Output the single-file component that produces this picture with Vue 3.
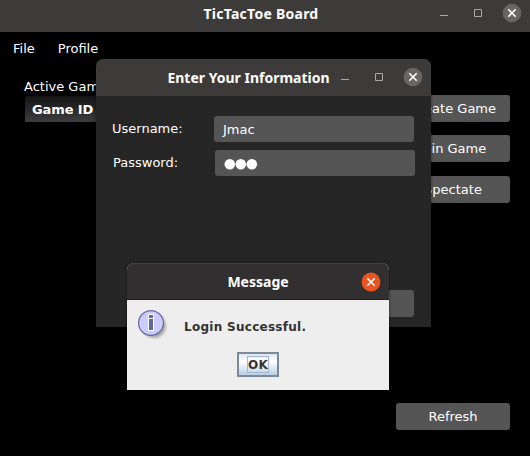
<script setup>
const menus = ['File', 'Profile']
const actions = ['Create Game', 'Join Game', 'Spectate']
</script>

<template>
  <div class="desktop">
    <section class="board">
      <header class="titlebar board-bar">
        <h1 class="title board-title">TicTacToe Board</h1>
        <svg class="controls" width="86" height="20" viewBox="0 0 86 20">
          <path class="ctl" d="M4 12.5h8M38.5 6.5h7v7h-7z" />
          <circle cx="76" cy="10" r="9.3" fill="#666" />
          <path class="x" d="M72.3 6.3l7.4 7.4M79.7 6.3l-7.4 7.4" />
        </svg>
      </header>
      <nav class="menu">
        <span v-for="m in menus" :key="m">{{ m }}</span>
      </nav>
      <div class="content">
        <div class="games">
          <div class="caption">Active Games</div>
          <div class="thead">Game ID</div>
        </div>
        <div class="side">
          <button v-for="a in actions" :key="a" class="btn" :class="{ low: a === 'Spectate' }">{{ a }}</button>
          <button class="btn refresh">Refresh</button>
        </div>
      </div>
    </section>

    <section class="login">
      <header class="titlebar login-bar">
        <h2 class="title login-title">Enter Your Information</h2>
        <svg class="controls" width="86" height="20" viewBox="0 0 86 20">
          <path class="ctl" d="M4 12.5h8M38.5 6.5h7v7h-7z" />
          <circle cx="76" cy="10" r="9.3" fill="#666" />
          <path class="x" d="M72.3 6.3l7.4 7.4M79.7 6.3l-7.4 7.4" />
        </svg>
      </header>
      <div class="form">
        <div class="row">
          <label>Username:</label>
          <div class="field">Jmac</div>
        </div>
        <div class="row second">
          <label>Password:</label>
          <div class="field">
            <svg class="dots" width="34" height="12" viewBox="0 0 34 12">
              <circle cx="5.8" cy="6.3" r="5.3" /><circle cx="16.8" cy="6.3" r="5.3" /><circle cx="27.8" cy="6.3" r="5.3" />
            </svg>
          </div>
        </div>
        <button class="btn submit"></button>
      </div>
    </section>

    <section class="message">
      <header class="titlebar message-bar">
        <h2 class="title message-title">Message</h2>
        <svg class="controls" width="20" height="20" viewBox="0 0 20 20">
          <circle cx="10" cy="10" r="9.4" fill="#e95420" />
          <path class="x" d="M6.3 6.3l7.4 7.4M13.7 6.3l-7.4 7.4" />
        </svg>
      </header>
      <div class="body">
        <div class="notice">
          <svg class="info" width="32" height="32" viewBox="0 0 32 32">
            <defs>
              <filter id="soft" x="-30%" y="-30%" width="160%" height="160%"><feGaussianBlur stdDeviation="1.3" /></filter>
            </defs>
            <circle cx="16" cy="16" r="12" fill="#777" opacity=".55" filter="url(#soft)" />
            <circle cx="13" cy="13" r="12.4" fill="#ccf" stroke="#669" stroke-width="1.2" />
            <path d="M10 4h6v17h-6z" fill="#fff" />
            <path d="M11 5h4v3h-4zM11 9h4v11h-4z" fill="#669" />
          </svg>
          <p>Login Successful.</p>
        </div>
        <button class="ok"><span>OK</span></button>
      </div>
    </section>
  </div>
</template>

<style>
body { background: #000; }
</style>

<style scoped>
* { box-sizing: border-box; }
.desktop {
  position: relative;
  width: 530px;
  height: 456px;
  overflow: hidden;
  background: #000;
  color: #fff;
  font: 13px/16px "DejaVu Sans", sans-serif;
}
.titlebar { display: grid; align-items: center; background: #3d3b39; }
.title {
  grid-area: 1 / 1;
  justify-self: center;
  margin: 0;
  font: bold 14px/20px "Noto Sans", sans-serif;
  white-space: nowrap;
  color: #fff;
}
.controls { grid-area: 1 / 1; justify-self: end; display: block; }
.ctl { fill: none; stroke: #aaa9a8; stroke-width: 1; }
.x { fill: none; stroke: #fff; stroke-width: 1.6; }
.board-bar { height: 32px; padding: 0 8px 6px 0; }
.board-title { margin: 2px 0 0; letter-spacing: .25px; }
.menu { display: flex; gap: 23px; height: 32px; padding: 9px 13px 7px; }
.content { display: flex; justify-content: space-between; padding: 15px 20px 0 24px; }
.caption { height: 17px; }
.thead {
  width: 200px;
  height: 26px;
  margin-left: 1px;
  padding: 6px 7px 4px;
  font-weight: bold;
  letter-spacing: -.1px;
  background: linear-gradient(#141414, #3d3d3d);
}
.side { display: flex; flex-direction: column; gap: 13px; padding-top: 16px; }
.btn {
  width: 114px;
  height: 27px;
  padding: 0;
  border: 0;
  border-radius: 3px;
  background: #555;
  color: #fff;
  font: 13px/27px "DejaVu Sans", sans-serif;
}
.low { margin-top: 1px; }
.refresh { margin-top: 187px; }
.login {
  position: absolute;
  left: 96px;
  top: 59px;
  width: 335px;
  height: 268px;
  border-radius: 7px 7px 0 0;
  overflow: hidden;
  background: #262626;
}
.login-bar { height: 37px; padding: 0 8px 1px 0; }
.login-title { margin: 1px 22px 0 0; }
.form { display: flex; flex-direction: column; padding: 20px 17px 0 16px; }
.row { display: flex; justify-content: space-between; height: 26px; }
.row label { padding-top: 5px; }
.second { margin: 8px -1px 0 1px; }
.field {
  width: 200px;
  height: 26px;
  padding: 6px 9px 4px;
  border-radius: 3px;
  background: #555;
}
.dots { display: block; margin-top: 2px; fill: #fff; }
.submit { align-self: flex-end; margin-top: 114px; }
.message {
  position: absolute;
  left: 127px;
  top: 263px;
  width: 262px;
  height: 127px;
  border-radius: 7px 7px 0 0;
  overflow: hidden;
  background: #eee;
}
.login, .message { box-shadow: 0 0 3px rgba(0, 0, 0, .55); }
.message-bar {
  height: 37px;
  padding: 0 8px 0 0;
  background: #322f30;
  border-top: 1px solid #454243;
  border-bottom: 1px solid #1e1d1d;
}
.message-title { margin: 0 0 0 8px; }
.body { display: flex; flex-direction: column; align-items: center; padding-top: 10px; }
.notice { display: flex; align-self: stretch; height: 42px; padding-left: 11px; }
.notice p {
  margin: 9px 0 0 14px;
  font: bold 12px/16px "DejaVu Sans", sans-serif;
  letter-spacing: .28px;
  color: #333;
}
.ok {
  display: flex;
  align-items: center;
  justify-content: center;
  width: 42px;
  height: 25px;
  padding: 0;
  border: 2px solid #7a8a99;
  background: linear-gradient(#dde8f3, #fff 35%, #b8cfe5);
}
.ok span {
  width: 22px;
  height: 17px;
  border: 1px solid #a3b8cc;
  display: flex;
  justify-content: center;
  font: bold 12px/16px "DejaVu Sans", sans-serif;
  letter-spacing: .3px;
  color: #333;
}
</style>
